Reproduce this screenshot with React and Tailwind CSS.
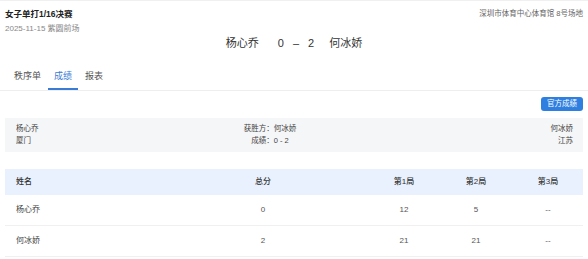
import React from "react";

const rows = [
    {name: "杨心乔", total: "0", g1: "12", g2: "5", g3: "--"},
    {name: "何冰娇", total: "2", g1: "21", g2: "21", g3: "--"},
];

const cols = "grid grid-cols-[153px_210px_72px_72px_72px]";

function App() {
    return (
        <div className="w-[588px] h-[259px] bg-white overflow-hidden text-[#333] font-['Liberation_Sans','Noto_Sans_CJK_SC',sans-serif]">
            <div className="border-t border-[#f0f0f0]"/>

            {/* header */}
            <div className="flex justify-between px-[5px] pt-[7px]">
                <div>
                    <div className="text-[8.5px] leading-[12px] font-bold text-[#222]">女子单打1/16决赛</div>
                    <div className="mt-[3px] text-[8px] leading-[12px] text-[#888]">2025-11-15 紫圆前场</div>
                </div>
                <div className="text-[7.5px] leading-[12px] text-[#666]">深圳市体育中心体育馆 8号场地</div>
            </div>

            {/* score line */}
            <div className="flex justify-center items-center text-[11px] leading-[14px] text-[#333] mt-px">
                <span>杨心乔</span>
                <span className="ml-[19px]">0</span>
                <span className="ml-[9px]">–</span>
                <span className="ml-[9px]">2</span>
                <span className="ml-[15px]">何冰娇</span>
            </div>

            {/* tabs */}
            <div className="mt-[14px] flex px-[7px] border-b border-[#eeeeee] text-[9px] leading-[10px]">
                <div className="px-[7px] pt-[7px] pb-[7px] border-b-2 border-transparent text-[#555]">秩序单</div>
                <div className="px-[6px] pt-[7px] pb-[7px] border-b-2 border-[#3a7bd5] text-[#3a7bd5]">成绩</div>
                <div className="px-[7px] pt-[7px] pb-[7px] border-b-2 border-transparent text-[#555]">报表</div>
            </div>

            <div className="flex justify-end px-[5px] mt-[6px]">
                <button className="h-[14px] w-[42px] rounded-[3px] bg-[#2f7fe0] text-white text-[7.5px] leading-[14px]">官方成绩</button>
            </div>

            {/* summary */}
            <div className="mx-[5px] mt-[7px] h-[34px] bg-[#f5f6f7] pt-[5px] grid grid-cols-[200px_130px_1fr] text-[7.5px] leading-[12px] text-[#444]">
                <div className="pl-[11px]">
                    <div>杨心乔</div>
                    <div>厦门</div>
                </div>
                <div className="text-center">
                    <div>获胜方：何冰娇</div>
                    <div>成绩：0 - 2</div>
                </div>
                <div className="text-right pr-[10px]">
                    <div>何冰娇</div>
                    <div>江苏</div>
                </div>
            </div>

            {/* table */}
            <div className="mx-[5px] mt-[17px] text-[8px]">
                <div className={`${cols} h-[26px] items-center bg-[#e8f1fd] text-[#333] font-medium`}>
                    <div className="pl-[11px]">姓名</div>
                    <div className="text-center">总分</div>
                    <div className="text-center">第1局</div>
                    <div className="text-center">第2局</div>
                    <div className="text-center">第3局</div>
                </div>
                {rows.map((r) => (
                    <div key={r.name} className={`${cols} h-[31px] items-center border-b border-[#f0f0f0] text-[#555]`}>
                        <div className="pl-[11px] text-[#444]">{r.name}</div>
                        <div className="text-center">{r.total}</div>
                        <div className="text-center">{r.g1}</div>
                        <div className="text-center">{r.g2}</div>
                        <div className="text-center">{r.g3}</div>
                    </div>
                ))}
            </div>
        </div>
    );
}

export default App;
